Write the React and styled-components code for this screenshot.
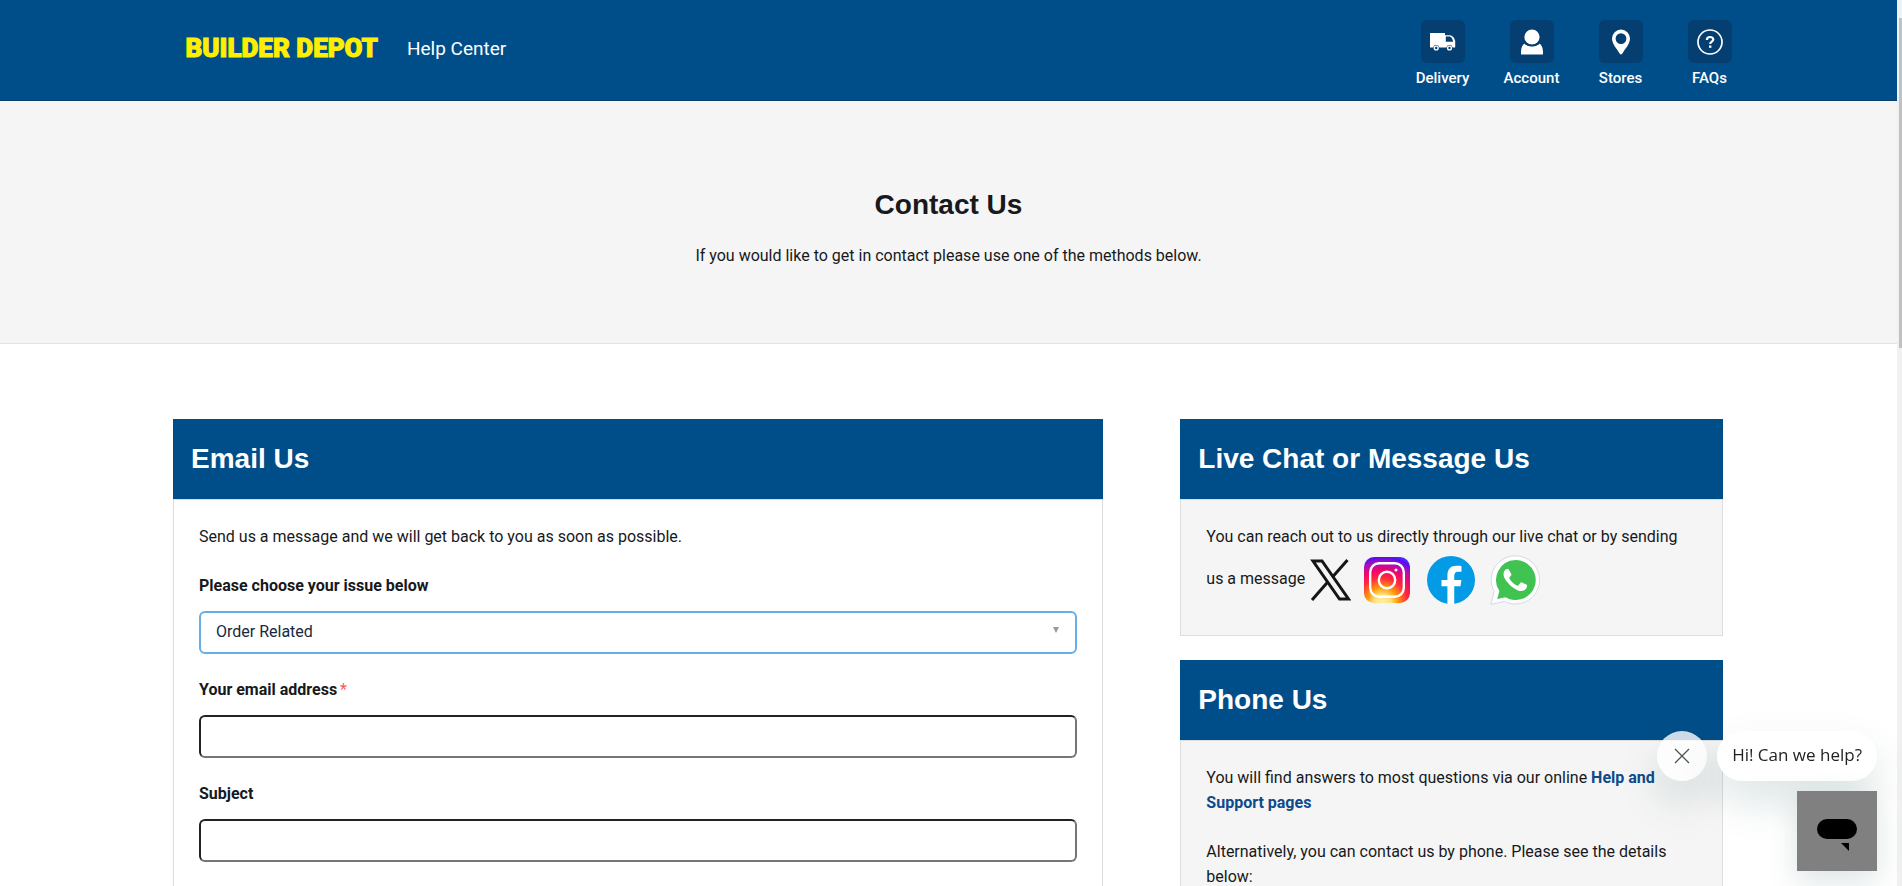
import React from "react";
import styled, { createGlobalStyle } from "styled-components";

const GlobalStyle = createGlobalStyle`
  *, *::before, *::after {
    box-sizing: border-box;
  }
  html {
    scrollbar-width: none;
  }
  body {
    background: #fff;
    color: #17191c;
    font-family: Roboto, "Liberation Sans", sans-serif;
    font-size: 16px;
    line-height: 25px;
    margin: 0;
    padding-right: 5px;
  }
  h1, h2, p {
    margin: 0;
  }
`;

const HeaderBar = styled.header`
  background: #004e89;
  border-bottom: 1px solid #053e70;
  color: #fff;
`;

const HeaderInner = styled.div`
  align-items: center;
  display: flex;
  height: 100px;
  justify-content: space-between;
  margin: 0 auto;
  max-width: 1566px;
  padding-left: 20px;
`;

const Brand = styled.div`
  align-items: center;
  display: flex;
  gap: 29px;
  padding-bottom: 4px;
  a {
    color: inherit;
    text-decoration: none;
  }
  .logo {
    color: #ffee00;
    font-size: 26px;
    font-weight: 900;
    -webkit-text-stroke: 1px #ffee00;
  }
  .title {
    font-size: 19px;
  }
`;

const Nav = styled.nav`
  display: flex;
  gap: 45px;
  padding-top: 8px;
`;

const NavItem = styled.a`
  align-items: center;
  color: #fff;
  display: flex;
  flex-direction: column;
  font-size: 15px;
  font-weight: 500;
  gap: 5px;
  line-height: 20px;
  text-decoration: none;
  white-space: nowrap;
  width: 44px;
`;

const NavTile = styled.span`
  align-items: center;
  background: #053e70;
  border-radius: 6px;
  display: flex;
  height: 43px;
  justify-content: center;
  width: 44px;
`;

const Hero = styled.section`
  background: #f5f5f5;
  border-bottom: 1px solid #e2e2e2;
  padding: 88px 0 75px;
  text-align: center;
  h1 {
    font-family: "Liberation Sans", Arial, sans-serif;
    font-size: 28px;
    line-height: 32px;
    margin-bottom: 22px;
  }
`;

const Columns = styled.main`
  align-items: start;
  display: grid;
  gap: 77px;
  grid-template-columns: 60fr 35fr;
  margin: 75px auto 60px;
  max-width: 1551px;
  padding-right: 1px;
`;

const Aside = styled.div`
  display: grid;
  gap: 24px;
`;

const Card = styled.section`
  h2 {
    background: #004e89;
    color: #fff;
    font-family: "Liberation Sans", Arial, sans-serif;
    font-size: 28px;
    line-height: 80px;
    padding-left: 18px;
  }
`;

const CardBody = styled.div`
  background: ${props => (props.$plain ? "#fff" : "#f5f5f5")};
  border: 1px solid #ddd;
  display: flex;
  flex-direction: column;
  gap: 24px;
  padding: 24px 25px;
`;

const Form = styled.form`
  display: grid;
  gap: 23px;
`;

const Field = styled.div`
  display: grid;
  gap: 13px;
  label {
    font-weight: 700;
  }
  .required {
    color: #ff5b4d;
    font-weight: 400;
    margin-left: 3px;
  }
`;

const TextInput = styled.input`
  background: #fff;
  border: 2px solid;
  border-color: #222 #767676 #767676 #222;
  border-radius: 6px;
  font: inherit;
  height: 43px;
  outline: none;
  padding: 0 15px;
  width: 100%;
`;

const SelectWrap = styled.div`
  position: relative;
  select {
    appearance: none;
    background: #fff;
    border: 2px solid #66aee8;
    border-radius: 6px;
    color: #17293f;
    display: block;
    font: inherit;
    height: 43px;
    outline: none;
    padding: 0 30px 3px 15px;
    width: 100%;
  }
  svg {
    pointer-events: none;
    position: absolute;
    right: 18px;
    top: 16px;
  }
`;

const Socials = styled.span`
  align-items: center;
  display: inline-flex;
  height: 62px;
  vertical-align: middle;
`;

const SocialLink = styled.a`
  align-items: center;
  display: flex;
  height: 50px;
  justify-content: center;
  width: ${props => props.$width || 64}px;
`;

const HelpLink = styled.a`
  color: #0d4a8c;
  font-weight: 700;
  text-decoration: none;
`;

const Widget = styled.div`
  align-items: flex-end;
  bottom: 15px;
  display: flex;
  flex-direction: column;
  gap: 10px;
  position: fixed;
  right: 25px;
  z-index: 10;
`;

const Prompt = styled.div`
  display: flex;
  gap: 10px;
`;

const CloseButton = styled.button`
  align-items: center;
  background: rgba(255, 255, 255, 0.8);
  border: 0;
  border-radius: 50%;
  box-shadow: 0 20px 40px rgba(23, 73, 77, 0.15);
  display: flex;
  height: 50px;
  justify-content: center;
  padding: 0;
  width: 50px;
`;

const Bubble = styled.button`
  background: #fff;
  border: 0;
  border-radius: 25px;
  box-shadow: 0 20px 40px rgba(23, 73, 77, 0.15);
  color: #222;
  font-family: "Open Sans", "Noto Sans", sans-serif;
  font-size: 17px;
  height: 50px;
  padding: 0 15px 3px;
`;

const Launcher = styled.button`
  background: #808080;
  border: 0;
  box-shadow: 0 10px 30px rgba(23, 73, 77, 0.15);
  display: block;
  height: 80px;
  padding: 0;
  width: 80px;
  svg {
    display: block;
  }
`;

const ScrollTrack = styled.div`
  background: #f1f1f1;
  bottom: 0;
  padding: 18px 0 0 2px;
  position: fixed;
  right: 0;
  top: 0;
  width: 5px;
  &::before {
    background: #c1c1c1;
    content: "";
    display: block;
    height: 38%;
  }
`;

const TruckIcon = () => (
  <svg width="26" height="18" viewBox="0 0 26 18" fill="#fff">
    <path d="M0 0h15v14.5H9.300a3.200 3.200 0 0 0-6.200 0H0z" />
    <path
      fillRule="evenodd"
      d="M15 2.200h5.200c2.800.6 4.300 3 5 5.800v6.500h-2.600a3.200 3.200 0 0 0-6.200 0H15zM15.800 3.600v5.200h7.400c-.7-2.800-1.700-4.800-3.500-5.200z"
    />
    <circle cx="6.200" cy="15" r="1.900" fill="none" stroke="#fff" strokeWidth="1.400" />
    <circle cx="19.500" cy="15" r="1.900" fill="none" stroke="#fff" strokeWidth="1.400" />
  </svg>
);

const AccountIcon = () => (
  <svg width="24" height="26" viewBox="0 0 24 26" fill="#fff">
    <circle cx="12" cy="8" r="7.600" />
    <path d="M1 25.500v-3c.2-4 1.500-6.500 3.500-8.300 4 4 11 4 15 0 2 1.800 3.300 4.300 3.500 8.300v3z" />
    <path d="M4 13.600c4 4.200 12 4.200 16 0" fill="none" stroke="#053e70" strokeWidth="1.400" />
  </svg>
);

const PinIcon = () => (
  <svg width="20" height="26" viewBox="0 0 20 26" fill="#fff">
    <path
      fillRule="evenodd"
      d="M10 .5a9 9 0 0 0-9 9c0 5.500 5 10.500 7.800 15.200.6.900 1.800.9 2.400 0C14 20 19 15 19 9.500a9 9 0 0 0-9-9zM10 4.200a5.400 5.400 0 1 1 0 10.800 5.400 5.400 0 0 1 0-10.800z"
    />
  </svg>
);

const QuestionIcon = () => (
  <svg width="26" height="26" viewBox="0 0 26 26" fill="none" stroke="#fff">
    <circle cx="13" cy="13" r="12" strokeWidth="1.700" />
    <path d="M9.900 11c0-4 6.400-3.800 6.400-.5 0 2.200-3.100 2.300-3.100 4.600" strokeWidth="2.200" />
    <path d="M13.200 16.500v2.300" strokeWidth="2.400" />
  </svg>
);

const XIcon = () => (
  <svg width="42" height="42" viewBox="0 0 42 42" fill="none" stroke="#161616">
    <path d="M4 2h9L39.500 40H30.500z" strokeWidth="3" />
    <path d="M38.500 1L23.500 18M18.300 23.500L3 41" strokeWidth="3" />
  </svg>
);

const InstagramIcon = () => (
  <svg width="46" height="46" viewBox="0 0 46 46">
    <defs>
      <radialGradient id="insta" cx="0.4" cy="1" r="1.05">
        <stop offset="0" stopColor="#fff0a8" />
        <stop offset="0.18" stopColor="#ffdf7a" />
        <stop offset="0.32" stopColor="#ff9d0a" />
        <stop offset="0.52" stopColor="#ff2a3c" />
        <stop offset="0.68" stopColor="#f0066a" />
        <stop offset="0.84" stopColor="#a312b8" />
        <stop offset="0.95" stopColor="#5a0cf0" />
        <stop offset="1" stopColor="#4a28ff" />
      </radialGradient>
    </defs>
    <rect width="46" height="46" rx="10" fill="url(#insta)" />
    <g fill="none" stroke="#fff" strokeWidth="2.400">
      <rect x="6.200" y="6.200" width="33.600" height="33.600" rx="9" />
      <circle cx="23" cy="23" r="8.200" />
    </g>
    <circle cx="32" cy="13" r="1.500" fill="#fff" />
  </svg>
);

const FacebookIcon = () => (
  <svg width="48" height="48" viewBox="5 5 38 38">
    <circle cx="24" cy="24" r="19" fill="#039be5" />
    <path
      fill="#fff"
      d="M26.572 29.036h4.917l.772-4.995h-5.690v-2.730c0-2.075.678-3.915 2.619-3.915h3.119v-4.359c-.548-.074-1.707-.236-3.897-.236-4.573 0-7.254 2.415-7.254 7.917v3.323h-4.701v4.995h4.701v13.729c.931.140 1.874.235 2.842.235.875 0 1.729-.080 2.572-.194z"
    />
  </svg>
);

const WhatsAppIcon = () => (
  <svg width="50" height="50" viewBox="0 0 50 50">
    <path
      d="M25.500.8a24 24 0 0 1 0 48.200c-4 0-7.800-1-11-2.600L.8 49.400l3.400-13A24 24 0 0 1 25.500.8z"
      fill="#fff"
      stroke="#d3dbe0"
    />
    <path
      d="M25.500 5a20 20 0 1 1-10 37.200L7.200 44l2.200-8A20 20 0 0 1 25.500 5z"
      fill="#40c351"
    />
    <path
      d="M19.200 15.200c-.5-1.200-1-1.200-1.600-1.200-2 0-4.100 1.800-4.100 5.200 0 2.300 1.400 4.900 3.700 7.900 2.700 3.500 6 6.400 10.200 8.100 3.200 1.300 5.200.9 6.800.1 1.600-.9 2.800-2.300 2.900-4.200 0-.9-.1-1.100-.8-1.500l-4.300-2.100c-.8-.3-1.200-.2-1.700.5l-1.800 2.200c-.4.500-.8.600-1.600.2-3.400-1.500-5.700-3.800-7.400-6.700-.4-.7-.2-1.100.3-1.600 1.500-1.700 1.900-2.200 1.500-3.200z"
      fill="#fff"
    />
  </svg>
);

const links = [
  { label: "Delivery", Icon: TruckIcon },
  { label: "Account", Icon: AccountIcon },
  { label: "Stores", Icon: PinIcon },
  { label: "FAQs", Icon: QuestionIcon }
];

const Header = () => (
  <HeaderBar>
    <HeaderInner>
      <Brand>
        <a className="logo" href="#home">
          BUILDER DEPOT
        </a>
        <a className="title" href="#help">
          Help Center
        </a>
      </Brand>
      <Nav>
        {links.map(({ label, Icon }) => (
          <NavItem key={label} href={`#${label.toLowerCase()}`}>
            <NavTile>
              <Icon />
            </NavTile>
            {label}
          </NavItem>
        ))}
      </Nav>
    </HeaderInner>
  </HeaderBar>
);

const EmailCard = () => (
  <Card>
    <h2>Email Us</h2>
    <CardBody $plain>
      <p>Send us a message and we will get back to you as soon as possible.</p>
      <Form>
        <Field>
          <label htmlFor="issue">Please choose your issue below</label>
          <SelectWrap>
            <select id="issue" defaultValue="order">
              <option value="order">Order Related</option>
            </select>
            <svg width="6" height="6" viewBox="0 0 6 6" fill="#999">
              <path d="M0 0h6L3 6z" />
            </svg>
          </SelectWrap>
        </Field>
        <Field>
          <label htmlFor="email">
            Your email address<span className="required">*</span>
          </label>
          <TextInput id="email" type="email" />
        </Field>
        <Field>
          <label htmlFor="subject">Subject</label>
          <TextInput id="subject" type="text" />
        </Field>
      </Form>
    </CardBody>
  </Card>
);

const ChatCard = () => (
  <Card>
    <h2>Live Chat or Message Us</h2>
    <CardBody>
      <p>
        You can reach out to us directly through our live chat or by sending us
        a message
        <Socials>
          <SocialLink href="#x" aria-label="X" $width={50}>
            <XIcon />
          </SocialLink>
          <SocialLink href="#instagram" aria-label="Instagram">
            <InstagramIcon />
          </SocialLink>
          <SocialLink href="#facebook" aria-label="Facebook">
            <FacebookIcon />
          </SocialLink>
          <SocialLink href="#whatsapp" aria-label="WhatsApp">
            <WhatsAppIcon />
          </SocialLink>
        </Socials>
      </p>
    </CardBody>
  </Card>
);

const PhoneCard = () => (
  <Card>
    <h2>Phone Us</h2>
    <CardBody>
      <p>
        You will find answers to most questions via our online{" "}
        <HelpLink href="#support">Help and Support pages</HelpLink>
      </p>
      <p>
        Alternatively, you can contact us by phone. Please see the details
        below:
      </p>
    </CardBody>
  </Card>
);

const ChatWidget = () => (
  <Widget>
    <Prompt>
      <CloseButton type="button" aria-label="Close">
        <svg width="16" height="16" viewBox="0 0 16 16" stroke="#4b5356" strokeWidth="1.300">
          <path d="M1 1l14 14M15 1L1 15" />
        </svg>
      </CloseButton>
      <Bubble type="button">Hi! Can we help?</Bubble>
    </Prompt>
    <Launcher type="button" aria-label="Open chat">
      <svg width="80" height="80" viewBox="0 0 80 80">
        <rect x="20" y="28" width="40" height="20" rx="10" />
        <path d="M44 52h8v8z" />
      </svg>
    </Launcher>
  </Widget>
);

const App = () => (
  <>
    <GlobalStyle />
    <Header />
    <Hero>
      <h1>Contact Us</h1>
      <p>If you would like to get in contact please use one of the methods below.</p>
    </Hero>
    <Columns>
      <EmailCard />
      <Aside>
        <ChatCard />
        <PhoneCard />
      </Aside>
    </Columns>
    <ChatWidget />
    <ScrollTrack />
  </>
);

export default App;
